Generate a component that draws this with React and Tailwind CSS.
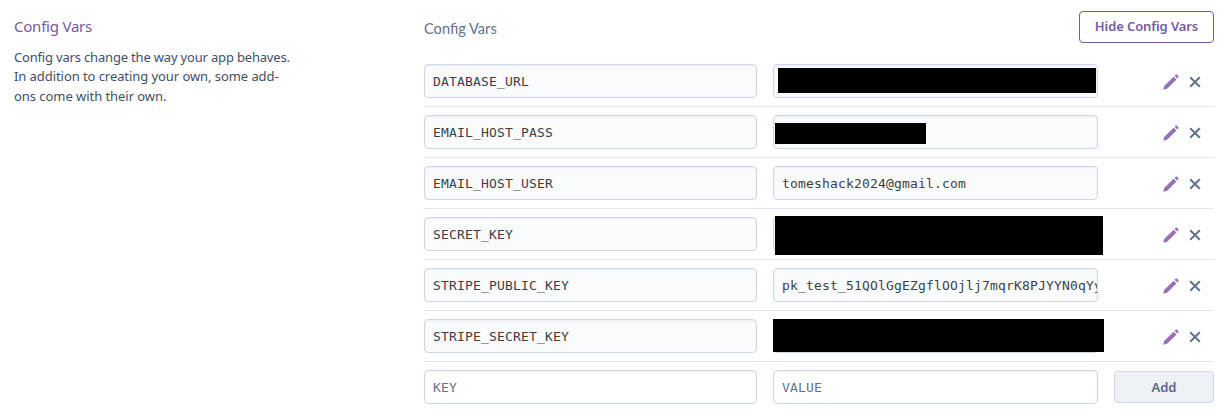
const vars = [
  { key: 'DATABASE_URL', mask: 'left-[5px] top-[4px] h-[25px] w-[318px]' },
  { key: 'EMAIL_HOST_PASS', mask: 'left-[2px] top-[8px] h-[21px] w-[151px]' },
  { key: 'EMAIL_HOST_USER', value: 'tomeshack2024@gmail.com' },
  { key: 'SECRET_KEY', mask: 'left-[2px] -top-px h-[39px] w-[328px]' },
  { key: 'STRIPE_PUBLIC_KEY', value: 'pk_test_51QOlGgEZgflOOjlj7mqrK8PJYYN0qYy' },
  { key: 'STRIPE_SECRET_KEY', mask: 'left-0 top-0 h-[33px] w-[331px]' },
];

const field =
  "block h-[34px] w-full overflow-hidden rounded-[4px] border border-[#cfd7e6] pl-2 font-['DejaVu_Sans_Mono',monospace] text-[13px] tracking-[0.174px] leading-[33px] whitespace-nowrap shadow-[inset_0_1px_2px_rgba(207,215,230,0.4)]";

function Field({ children, empty }) {
  return (
    <div className={`${field} ${empty ? 'bg-white text-[#62738d]' : 'bg-[#f9fbfd] text-[#3f3f44]'}`}>
      {children}
    </div>
  );
}

function Pencil() {
  return (
    <svg className="h-4 w-4" viewBox="0 0 16 16" fill="#9572b8">
      <path d="M.3 15.8 1.1 12 10.6 2.7 13.5 5.6 4.1 14.8Z" />
      <path d="M11.5 1.8 12.6.7Q13.3 0 14 .7L15.3 2Q16 2.7 15.3 3.4L14.3 4.6Z" />
    </svg>
  );
}

function Cross() {
  return (
    <svg className="h-3 w-3" viewBox="0 0 12 12" fill="none" stroke="#62738d" strokeWidth="2">
      <path d="M1.2 1.2 10.8 10.8M10.8 1.2 1.2 10.8" />
    </svg>
  );
}

export default function App() {
  return (
    <main className="flex h-[420px] w-[1231px] overflow-hidden bg-white pl-[14px] font-['Noto_Sans',sans-serif]">
      <aside className="w-[410px] shrink-0 pt-[14px]">
        <h2 className="text-[15px] leading-6 tracking-[-0.22px] text-[#79589f]">Config Vars</h2>
        <p className="mt-[10px] w-[300px] text-[13px] leading-[19.4px] text-[#3f4f68]">
          <span className="tracking-[-0.18px]">Config vars change the way your app behaves.</span>
          <br />
          <span className="tracking-[-0.07px]">In addition to creating your own, some add-</span>
          <br />
          <span className="tracking-[-0.05px]">ons come with their own.</span>
        </p>
      </aside>
      <section className="w-[790px]">
        <header className="flex h-14 items-start justify-between">
          <h3 className="pt-[19px] font-['Lato',sans-serif] text-[14.6px] leading-5 text-[#62738d]">Config Vars</h3>
          <button className="mt-[11px] h-8 w-[135px] rounded-[4px] border border-[#79589f] text-[13px] font-semibold tracking-[-0.1px] whitespace-nowrap text-[#79589f]">
            Hide Config Vars
          </button>
        </header>
        {vars.map(({ key, value, mask }) => (
          <div key={key} className="flex h-[51px] items-start border-b border-[#e3e8f2] pt-2">
            <div className="w-[333px]">
              <Field>{key}</Field>
            </div>
            <div className="relative ml-4 w-[325px]">
              <Field>{value}</Field>
              {mask && <span className={`absolute bg-black ${mask}`} />}
            </div>
            <div className="ml-[65px] flex h-[34px] items-center gap-[10px] pt-px">
              <Pencil />
              <Cross />
            </div>
          </div>
        ))}
        <div className="flex items-start pt-2">
          <div className="w-[333px]">
            <Field empty>KEY</Field>
          </div>
          <div className="ml-4 w-[325px]">
            <Field empty>VALUE</Field>
          </div>
          <button className="mt-px ml-4 h-8 w-[100px] rounded-[4px] border border-[#cfd7e6] bg-[#eef1f6] pt-px text-[13px] font-semibold text-[#596981]">
            Add
          </button>
        </div>
      </section>
    </main>
  );
}
